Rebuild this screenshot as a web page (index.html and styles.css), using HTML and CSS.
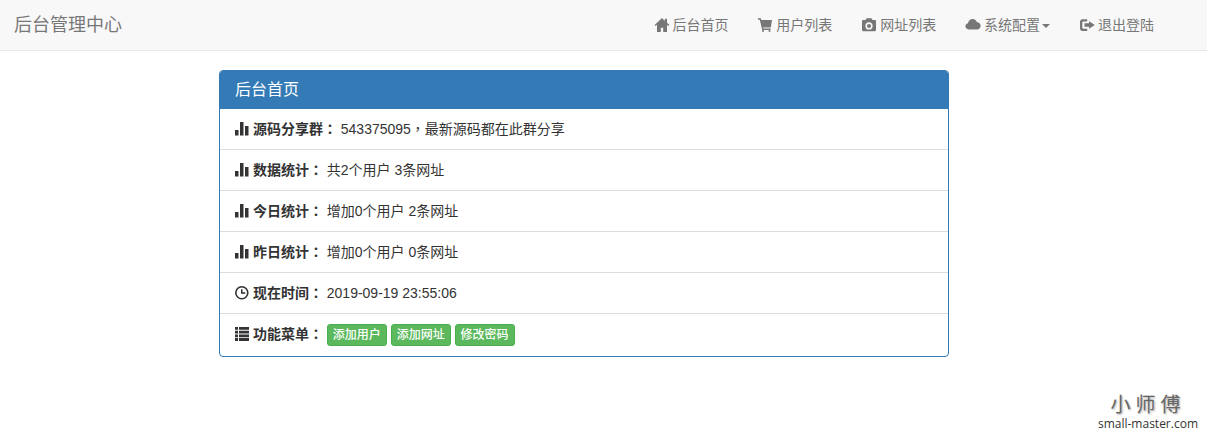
FILE: index.html
```html
<!DOCTYPE html>
<html lang="zh-CN">
<head>
<meta charset="utf-8">
<title>后台管理中心</title>
<link rel="stylesheet" href="styles.css">
</head>
<body>
<nav class="navbar">
  <a class="brand" href="#">后台管理中心</a>
  <ul class="nav">
    <li><a href="#"><svg class="icon" viewBox="0 0 14 14"><path d="M7 0-.4 7l1 1.100L2 6.800V14h3.800V9.800h2.400V14H12V6.800l1.400 1.300 1-1.100-2.400-2.300V.8H9.800v2.100z"/></svg> 后台首页</a></li>
    <li><a href="#"><svg class="icon" viewBox="0 0 14 14"><path d="M0 .3h2.800l.5 1.700H14l-1.200 7.600H5l.3 1h7.300V12H4.200L1.800 1.700H0z"/><circle cx="5" cy="13" r="1"/><circle cx="11.500" cy="13" r="1"/></svg> 用户列表</a></li>
    <li><a href="#"><svg class="icon" viewBox="0 0 14 14"><path fill-rule="evenodd" d="M1.200 2h2.300L4.500.3h5L10.500 2h2.300c.7 0 1.200.5 1.200 1.200v8.900c0 .7-.5 1.200-1.200 1.200H1.200C.5 13.300 0 12.800 0 12.100V3.200C0 2.500.5 2 1.200 2zM7 4.300a3.600 3.600 0 1 0 0 7.200 3.600 3.600 0 0 0 0-7.200zm0 1.600a2 2 0 1 1 0 4 2 2 0 0 1 0-4z"/></svg> 网址列表</a></li>
    <li><a href="#"><svg class="icon" viewBox="0 0 14 14"><path d="M3 11.500C1.300 11.500-.6 10.200-.6 8.300c0-1.500 1.100-2.700 2.500-3C2.300 3 4.300 1 6.700 1c1.900 0 3.400 1.100 4.100 2.900 2.200.2 3.900 1.800 3.900 3.900 0 2-1.600 3.700-3.600 3.700z"/></svg> 系统配置<span class="caret"></span></a></li>
    <li><a href="#"><svg class="icon" viewBox="0 0 14 14"><path d="M2.500 1.300h4.700v2.200H3.200c-.5 0-.9.400-.9.900v5.400c0 .5.400.9.900.9h4v2.200H2.500C1.100 12.900 0 11.800 0 10.400V3.800C0 2.400 1.100 1.300 2.500 1.300z"/><path d="M9 3.200 14.800 7 9 10.800V8.700H4.500V5.300H9z"/></svg> 退出登陆</a></li>
  </ul>
</nav>
<main class="panel">
  <h1 class="panel-title">后台首页</h1>
  <ul class="list">
    <li class="row"><svg class="icon" viewBox="0 0 14 14"><path d="M0 8h3.500v5.500H0zM5 0h3.500v13.500H5zM10 4h3.500v9.500H10z"/></svg> <b>源码分享群<span class="punct" lang="zh-TW">：</span></b> 543375095<span class="punct" lang="zh-TW">，</span>最新源码都在此群分享</li>
    <li class="row"><svg class="icon" viewBox="0 0 14 14"><path d="M0 8h3.500v5.500H0zM5 0h3.500v13.500H5zM10 4h3.500v9.500H10z"/></svg> <b>数据统计<span class="punct" lang="zh-TW">：</span></b> 共2个用户 3条网址</li>
    <li class="row"><svg class="icon" viewBox="0 0 14 14"><path d="M0 8h3.500v5.500H0zM5 0h3.500v13.500H5zM10 4h3.500v9.500H10z"/></svg> <b>今日统计<span class="punct" lang="zh-TW">：</span></b> 增加0个用户 2条网址</li>
    <li class="row"><svg class="icon" viewBox="0 0 14 14"><path d="M0 8h3.500v5.500H0zM5 0h3.500v13.500H5zM10 4h3.500v9.500H10z"/></svg> <b>昨日统计<span class="punct" lang="zh-TW">：</span></b> 增加0个用户 0条网址</li>
    <li class="row"><svg class="icon" viewBox="0 0 14 14"><path fill-rule="evenodd" d="M6.800 0a6.800 6.800 0 1 1 0 13.600A6.800 6.800 0 0 1 6.800 0zm0 1.600a5.200 5.200 0 1 0 0 10.400 5.200 5.200 0 0 0 0-10.400z"/><path d="M6 3.200h1.500v3h2.800v1.500H6z"/></svg> <b>现在时间<span class="punct" lang="zh-TW">：</span></b> 2019-09-19 23:55:06</li>
    <li class="row row-last"><svg class="icon" viewBox="0 0 14 14"><path d="M0 0h3v2.800H0zM4 0h10v2.800H4zM0 3.700h3v2.800H0zM4 3.700h10v2.800H4zM0 7.400h3v2.800H0zM4 7.400h10v2.800H4zM0 11.100h3v2.800H0zM4 11.100h10v2.800H4z"/></svg> <b>功能菜单<span class="punct" lang="zh-TW">：</span></b> <a class="btn" href="#">添加用户</a> <a class="btn" href="#">添加网址</a> <a class="btn" href="#">修改密码</a></li>
  </ul>
</main>
<div class="mark"><span class="mark-cn">小师傅</span><span class="mark-url">small-master.com</span></div>
</body>
</html>
```

FILE: styles.css
```css
* { box-sizing: border-box; }
html, body { margin: 0; padding: 0; }
body {
  height: 432px;
  overflow: hidden;
  position: relative;
  background: #fff;
  color: #333;
  font: 14px/20px "Liberation Sans", "Noto Sans CJK SC", sans-serif;
}
a { text-decoration: none; }
ul { list-style: none; margin: 0; padding: 0; }
.icon { width: 14px; height: 14px; fill: currentColor; vertical-align: -2px; display: inline-block; overflow: visible; }
.punct { font-family: "Liberation Sans", "Noto Sans CJK TC", sans-serif; }
.navbar {
  display: flex;
  justify-content: space-between;
  height: 51px;
  padding: 0 38px 0 14px;
  background: #f8f8f8;
  border-bottom: 1px solid #e7e7e7;
}
.brand { color: #777; font-size: 18px; line-height: 50px; }
.nav { display: flex; }
.nav a { display: block; padding: 15px; color: #777; }
.caret {
  display: inline-block;
  margin-left: 2px;
  vertical-align: middle;
  border-top: 4px solid;
  border-left: 4px solid transparent;
  border-right: 4px solid transparent;
}
.panel {
  width: 730px;
  margin: 19px 0 0 219px;
  border: 1px solid #337ab7;
  border-radius: 4px;
  overflow: hidden;
}
.panel-title {
  margin: 0;
  height: 38px;
  padding: 9px 15px;
  background: #337ab7;
  color: #fff;
  font-size: 16px;
  font-weight: 400;
  line-height: 20px;
}
.row { height: 41px; padding: 10px 15px; border-top: 1px solid #ddd; white-space: pre-wrap; }
.row:first-child { border-top: 0; height: 40px; }
.row-last { height: 43px; }
.btn {
  display: inline-block;
  padding: 1px 5px;
  background: #5cb85c;
  border: 1px solid #4cae4c;
  border-radius: 3px;
  color: #fff;
  font-size: 12px;
  font-weight: 500;
  line-height: 18px;
}
.mark {
  position: absolute;
  right: 9px;
  bottom: 1px;
  display: flex;
  flex-direction: column;
  align-items: center;
}
.mark-cn { font: 20px/24px "Noto Sans CJK SC", sans-serif; letter-spacing: 5px; color: #666; text-shadow: 1px 1px 2px #aaa; }
.mark-url { font: 12px/15px "Open Sans", "Liberation Sans", sans-serif; color: #333; }
```
